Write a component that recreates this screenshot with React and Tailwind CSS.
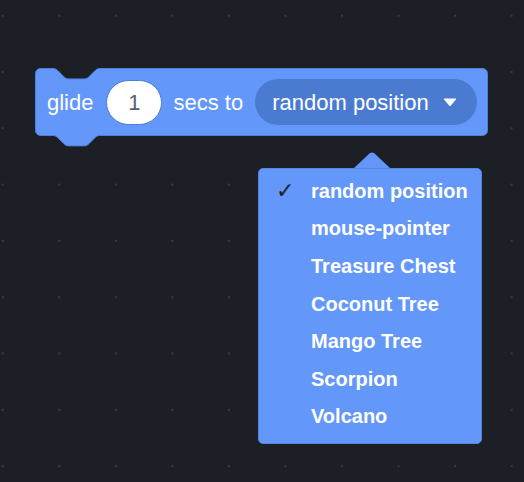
import React from 'react';

const items = [
  'random position',
  'mouse-pointer',
  'Treasure Chest',
  'Coconut Tree',
  'Mango Tree',
  'Scorpion',
  'Volcano',
];

function DotGrid() {
  return (
    <svg className="absolute inset-0" width="524" height="482">
      <defs>
        <pattern id="dots" x="1.7" y="14.7" width="56.55" height="56.3" patternUnits="userSpaceOnUse">
          <rect x="0" y="0" width="2" height="2" fill="#363a45" />
        </pattern>
      </defs>
      <rect width="524" height="482" fill="url(#dots)" />
    </svg>
  );
}

function BlockShape() {
  return (
    <svg className="absolute left-0 top-0" width="454" height="80">
      <path
        d="M0.5,5.5 a5,5 0 0 1 5,-5 H18 c2.6,0 3.9,1.3 5.2,2.6 l5.2,5.2 c1.3,1.3 2.6,2.6 5.2,2.6 h15.6 c2.6,0 3.9,-1.3 5.2,-2.6 l5.2,-5.2 c1.3,-1.3 2.6,-2.6 5.2,-2.6 H447.5 a5,5 0 0 1 5,5 V62.5 a5,5 0 0 1 -5,5 H64.8 c-2.6,0 -3.9,1.3 -5.2,2.6 l-5.2,5.2 c-1.3,1.3 -2.6,2.6 -5.2,2.6 h-15.6 c-2.6,0 -3.9,-1.3 -5.2,-2.6 l-5.2,-5.2 c-1.3,-1.3 -2.6,-2.6 -5.2,-2.6 H5.5 a5,5 0 0 1 -5,-5 Z"
        fill="#6397fa"
        stroke="#4f7fd6"
        strokeWidth="1"
      />
    </svg>
  );
}

export default function App() {
  return (
    <div
      className="relative h-[482px] w-[524px] overflow-hidden bg-[#1c1f26]"
      style={{ fontFamily: '"Liberation Sans", Arial, sans-serif' }}
    >
      <DotGrid />

      <div className="relative pl-[35px] pt-[68px]">
        {/* glide block */}
        <div className="relative h-[68px] w-[453px]">
          <BlockShape />
          <div className="relative flex h-[68px] items-center pl-[12px] text-[22px] text-white">
            <span>glide</span>
            <div className="ml-[13px] flex h-[45px] w-[56px] items-center justify-center rounded-full border border-[#4d7dd4] bg-white text-[#575e75]">
              1
            </div>
            <span className="ml-[11px]">secs to</span>
            <div className="ml-[12px] flex h-[46px] w-[222px] items-center rounded-full bg-[#4b7bd1] pl-[17px] pr-[20px]">
              <span>random position</span>
              <svg className="ml-auto" width="14" height="9" viewBox="0 0 14 9">
                <path d="M1.5,0.5 H12.5 Q13.8,0.5 12.9,1.6 L7.9,7.6 Q7,8.6 6.1,7.6 L1.1,1.6 Q0.2,0.5 1.5,0.5 Z" fill="#ffffff" />
              </svg>
            </div>
          </div>
        </div>

        {/* dropdown menu */}
        <div className="ml-[223px] mt-[16px] w-[224px]">
          <svg className="ml-[96px] block" width="36" height="16" viewBox="0 0 36 16">
            <path d="M0,16 L15.5,1.6 Q18,-0.6 20.5,1.6 L36,16 Z" fill="#6397fa" />
          </svg>
          <div className="rounded-[5px] border border-[#5784dd] bg-[#6397fa] pb-[8px] pt-[3px]">
            {items.map((item, i) => (
              <div key={item} className="flex h-[37.6px] items-center">
                <span className="w-[52px] pl-[17px] text-[22px] leading-none text-[#1c1f26]" style={{ fontFamily: '"DejaVu Sans", sans-serif' }}>
                  {i === 0 ? '✓' : ''}
                </span>
                <span className="text-[20px] font-bold text-white">{item}</span>
              </div>
            ))}
          </div>
        </div>
      </div>
    </div>
  );
}
